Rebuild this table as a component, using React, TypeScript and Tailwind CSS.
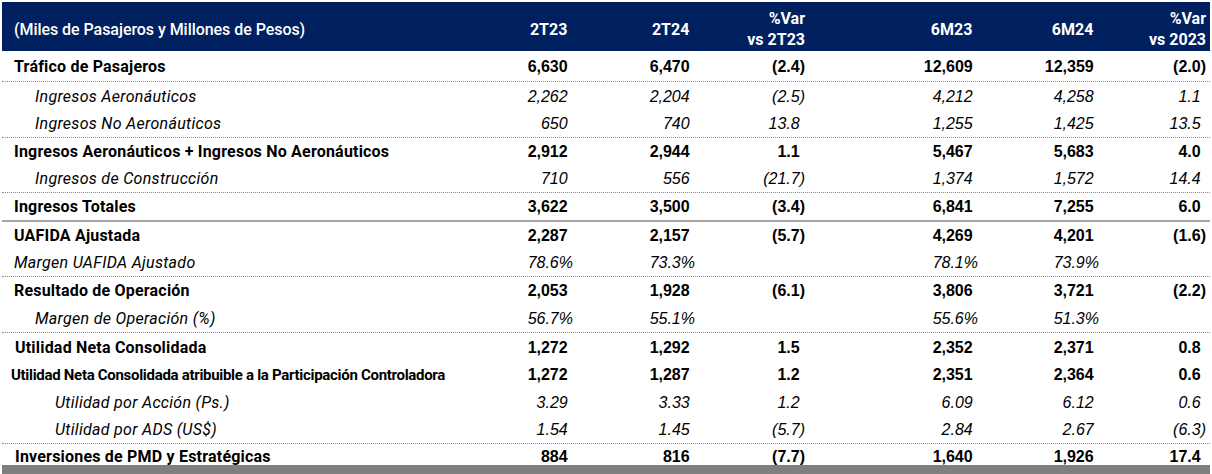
import React from "react";

type Row = {
  label: string;
  kind: "bold" | "italic" | "small";
  indent: string;
  vals: string[];
  h: string;
  border?: "dotted" | "solid";
};

const rows: Row[] = [
  { label: "Tráfico de Pasajeros", kind: "bold", indent: "pl-[12px]", vals: ["6,630", "6,470", "(2.4)", "12,609", "12,359", "(2.0)"], h: "h-[31px]", border: "dotted" },
  { label: "Ingresos Aeronáuticos", kind: "italic", indent: "pl-[33px]", vals: ["2,262", "2,204", "(2.5)", "4,212", "4,258", "1.1"], h: "h-[28px]" },
  { label: "Ingresos No Aeronáuticos", kind: "italic", indent: "pl-[33px]", vals: ["650", "740", "13.8", "1,255", "1,425", "13.5"], h: "h-[28px]", border: "dotted" },
  { label: "Ingresos Aeronáuticos + Ingresos No Aeronáuticos", kind: "bold", indent: "pl-[12px]", vals: ["2,912", "2,944", "1.1", "5,467", "5,683", "4.0"], h: "h-[27px]" },
  { label: "Ingresos de Construcción", kind: "italic", indent: "pl-[33px]", vals: ["710", "556", "(21.7)", "1,374", "1,572", "14.4"], h: "h-[28px]", border: "dotted" },
  { label: "Ingresos Totales", kind: "bold", indent: "pl-[12px]", vals: ["3,622", "3,500", "(3.4)", "6,841", "7,255", "6.0"], h: "h-[29px]", border: "solid" },
  { label: "UAFIDA Ajustada", kind: "bold", indent: "pl-[12px]", vals: ["2,287", "2,157", "(5.7)", "4,269", "4,201", "(1.6)"], h: "h-[27px]" },
  { label: "Margen UAFIDA Ajustado", kind: "italic", indent: "pl-[12px]", vals: ["78.6%", "73.3%", "", "78.1%", "73.9%", ""], h: "h-[28px]", border: "dotted" },
  { label: "Resultado de Operación", kind: "bold", indent: "pl-[12px]", vals: ["2,053", "1,928", "(6.1)", "3,806", "3,721", "(2.2)"], h: "h-[27px]" },
  { label: "Margen de Operación (%)", kind: "italic", indent: "pl-[33px]", vals: ["56.7%", "55.1%", "", "55.6%", "51.3%", ""], h: "h-[29px]", border: "dotted" },
  { label: "Utilidad Neta Consolidada", kind: "bold", indent: "pl-[13px]", vals: ["1,272", "1,292", "1.5", "2,352", "2,371", "0.8"], h: "h-[28px]" },
  { label: "Utilidad Neta Consolidada atribuible a la Participación Controladora", kind: "small", indent: "pl-[9px]", vals: ["1,272", "1,287", "1.2", "2,351", "2,364", "0.6"], h: "h-[27px]" },
  { label: "Utilidad por Acción (Ps.)", kind: "italic", indent: "pl-[53px]", vals: ["3.29", "3.33", "1.2", "6.09", "6.12", "0.6"], h: "h-[28px]" },
  { label: "Utilidad por ADS (US$)", kind: "italic", indent: "pl-[53px]", vals: ["1.54", "1.45", "(5.7)", "2.84", "2.67", "(6.3)"], h: "h-[28px]", border: "dotted" },
  { label: "Inversiones de PMD y Estratégicas", kind: "bold", indent: "pl-[13px]", vals: ["884", "816", "(7.7)", "1,640", "1,926", "17.4"], h: "h-[21px]" },
];

const grid = "grid grid-cols-[453px_118px_122px_110px_173px_121px_107px]";
const labelFont = "font-['Roboto','Liberation_Sans',sans-serif]";
const numFont = "font-['Liberation_Sans','Arial',sans-serif]";

function Num({ v, kind }: { v: string; kind: Row["kind"] }) {
  const pad = v !== "" && !v.endsWith(")") && !v.endsWith("%");
  const style = kind === "italic" ? "italic font-normal" : "font-bold";
  return (
    <div className={`flex items-center justify-end pt-[1px] ${numFont} text-[16px] ${style} text-black`}>
      <span>{v}</span>
      {pad && <span className="invisible">)</span>}
    </div>
  );
}

function HeadCell({ lines }: { lines: string[] }) {
  if (lines.length === 1) {
    return (
      <div className={`flex items-center justify-end pt-[6px] ${labelFont} text-[16px] font-bold text-white`}>
        <span>{lines[0]}</span>
        <span className="invisible">)</span>
      </div>
    );
  }
  return (
    <div className={`flex flex-col items-end justify-end pb-[1px] ${labelFont} text-[16px] font-bold leading-[21px] text-white`}>
      {lines.map((l) => (
        <span key={l}>{l}</span>
      ))}
    </div>
  );
}

export default function App() {
  return (
    <div className="w-[1212px] h-[474px] overflow-hidden bg-white pt-[2px] pl-[2px]">
      <div className="w-[1208px]">
        <div className={`${grid} h-[49px] bg-[#002060]`}>
          <div className={`flex items-center pt-[6px] pl-[12px] ${labelFont} text-[16px] font-medium tracking-[-0.05px] text-white whitespace-nowrap`}>
            (Miles de Pasajeros y Millones de Pesos)
          </div>
          <HeadCell lines={["2T23"]} />
          <HeadCell lines={["2T24"]} />
          <HeadCell lines={["%Var", "vs 2T23"]} />
          <HeadCell lines={["6M23"]} />
          <HeadCell lines={["6M24"]} />
          <HeadCell lines={["%Var", "vs 2023"]} />
        </div>
        {rows.map((r) => {
          const borderCls =
            r.border === "dotted"
              ? "border-b border-dotted border-[#8c8c8c]"
              : r.border === "solid"
              ? "border-b-2 border-solid border-[#a6a6a6]"
              : "";
          const labelStyle =
            r.kind === "bold"
              ? "text-[16px] font-bold tracking-[0.2px]"
              : r.kind === "small"
              ? "text-[15px] font-bold tracking-[-0.3px]"
              : "text-[16px] italic font-normal tracking-[0.3px]";
          return (
            <div key={r.label} className={`${grid} ${r.h} ${borderCls}`}>
              <div className={`flex items-center pt-[1px] ${r.indent} ${labelFont} ${labelStyle} text-black whitespace-nowrap`}>
                {r.label}
              </div>
              {r.vals.map((v, i) => (
                <Num key={i} v={v} kind={r.kind} />
              ))}
            </div>
          );
        })}
        <div className="h-[12px] bg-[#7f7f7f]" />
      </div>
    </div>
  );
}
